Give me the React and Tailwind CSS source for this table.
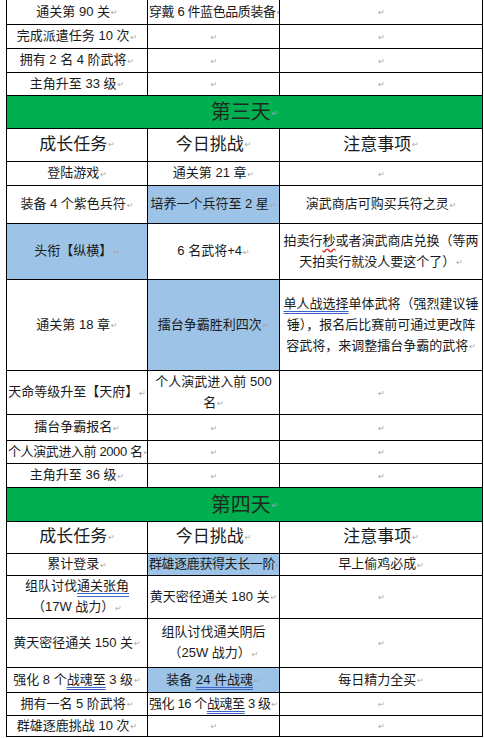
import clsx from "clsx";

const COLS = ["w-[141px]", "w-[132px]", "w-[203px]"];

const Mark = () => (
  <span className="ml-px font-['DejaVu_Sans',sans-serif] text-[8px] text-[#a8a8a8] align-middle">
    ↵
  </span>
);

const Dbl = ({ children }) => (
  <span className="underline decoration-double decoration-[#3b62c8] underline-offset-[3px]">
    {children}
  </span>
);

const Wavy = ({ children }) => (
  <span className="underline decoration-wavy decoration-[#e02020] underline-offset-[3px]">
    {children}
  </span>
);

const Row = ({ h, cells, head }) => (
  <div className={clsx("flex border-b border-black", h)}>
    {cells.map((c, i) => (
      <div
        key={i}
        className={clsx(
          "flex items-center border-r border-black overflow-hidden text-center whitespace-nowrap",
          COLS[i],
          c.tight ? "justify-start pl-px tracking-[-0.4px]" : "justify-center",
          head ? "text-[17px] leading-[22px]" : "text-[13px] leading-[21px]",
          c.hl && "bg-[#9dc3e6]"
        )}
      >
        <div>
          {c.t}
          <Mark />
        </div>
      </div>
    ))}
  </div>
);

const DayBar = ({ h, title }) => (
  <div className={clsx("flex border-b border-black", h)}>
    <div className="flex flex-1 justify-center items-center bg-[#00b050] border-r border-black text-[20px] text-[#1e2a1e]">
      <span>
        {title}
        <Mark />
      </span>
    </div>
  </div>
);

const HEADER = [{ t: "成长任务" }, { t: "今日挑战" }, { t: "注意事项" }];

export default function App() {
  return (
    <div className="bg-white w-[484px] h-[738px] overflow-hidden font-['Liberation_Sans','Noto_Sans_CJK_SC',sans-serif] text-[#1a1a1a]">
      <div className="ml-[6px] border-black border-l w-[477px]">
        <Row h="h-[25px]" cells={[{ t: "通关第 90 关" }, { t: "穿戴 6 件蓝色品质装备", tight: true }, { t: "" }]} />
        <Row h="h-[24px]" cells={[{ t: "完成派遣任务 10 次" }, { t: "" }, { t: "" }]} />
        <Row h="h-[24px]" cells={[{ t: "拥有 2 名 4 阶武将" }, { t: "" }, { t: "" }]} />
        <Row h="h-[23px]" cells={[{ t: "主角升至 33 级" }, { t: "" }, { t: "" }]} />

        {/* Day 3 */}
        <DayBar h="h-[33px]" title="第三天" />
        <Row h="h-[33px]" head cells={HEADER} />
        <Row h="h-[24px]" cells={[{ t: "登陆游戏" }, { t: "通关第 21 章" }, { t: "" }]} />
        <Row
          h="h-[38px]"
          cells={[
            { t: "装备 4 个紫色兵符" },
            { t: "培养一个兵符至 2 星", hl: true },
            { t: "演武商店可购买兵符之灵" },
          ]}
        />
        <Row
          h="h-[56px]"
          cells={[
            { t: "头衔【纵横】", hl: true },
            { t: "6 名武将+4" },
            {
              t: (
                <>
                  拍卖行<Wavy>秒</Wavy>或者演武商店兑换（等两
                  <br />
                  天拍卖行就没人要这个了）
                </>
              ),
            },
          ]}
        />
        <Row
          h="h-[91px]"
          cells={[
            { t: "通关第 18 章" },
            { t: "擂台争霸胜利四次", hl: true },
            {
              t: (
                <>
                  <Dbl>单人战选择</Dbl>单体武将（强烈建议锤
                  <br />
                  锤），报名后比赛前可通过更改阵
                  <br />
                  容武将，来调整擂台争霸的武将
                </>
              ),
            },
          ]}
        />
        <Row
          h="h-[44px]"
          cells={[
            { t: "天命等级升至【天府】" },
            {
              t: (
                <>
                  个人演武进入前 500
                  <br />名
                </>
              ),
            },
            { t: "" },
          ]}
        />
        <Row h="h-[26px]" cells={[{ t: "擂台争霸报名" }, { t: "" }, { t: "" }]} />
        <Row h="h-[23px]" cells={[{ t: "个人演武进入前 2000 名", tight: true }, { t: "" }, { t: "" }]} />
        <Row h="h-[24px]" cells={[{ t: "主角升至 36 级" }, { t: "" }, { t: "" }]} />

        {/* Day 4 */}
        <DayBar h="h-[34px]" title="第四天" />
        <Row h="h-[32px]" head cells={HEADER} />
        <Row
          h="h-[22px]"
          cells={[
            { t: "累计登录" },
            { t: "群雄逐鹿获得夫长一阶", hl: true, tight: true },
            { t: "早上偷鸡必成" },
          ]}
        />
        <Row
          h="h-[43px]"
          cells={[
            {
              t: (
                <>
                  组队讨伐<Dbl>通关张角</Dbl>
                  <br />
                  （17W 战力）
                </>
              ),
            },
            { t: "黄天密径通关 180 关" },
            { t: "" },
          ]}
        />
        <Row
          h="h-[49px]"
          cells={[
            { t: "黄天密径通关 150 关" },
            {
              t: (
                <>
                  组队讨伐通关阴后
                  <br />
                  （25W 战力）
                </>
              ),
            },
            { t: "" },
          ]}
        />
        <Row
          h="h-[25px]"
          cells={[
            {
              t: (
                <>
                  强化 8 个<Dbl>战魂至</Dbl> 3 级
                </>
              ),
            },
            {
              t: (
                <>
                  装备 <Dbl>24 件战魂</Dbl>
                </>
              ),
              hl: true,
            },
            { t: "每日精力全买" },
          ]}
        />
        <Row
          h="h-[23px]"
          cells={[
            { t: "拥有一名 5 阶武将" },
            {
              t: (
                <>
                  强化 16 个<Dbl>战魂至</Dbl> 3 级
                </>
              ),
              tight: true,
            },
            { t: "" },
          ]}
        />
        <Row h="h-[21px]" cells={[{ t: "群雄逐鹿挑战 10 次" }, { t: "" }, { t: "" }]} />
      </div>
    </div>
  );
}
